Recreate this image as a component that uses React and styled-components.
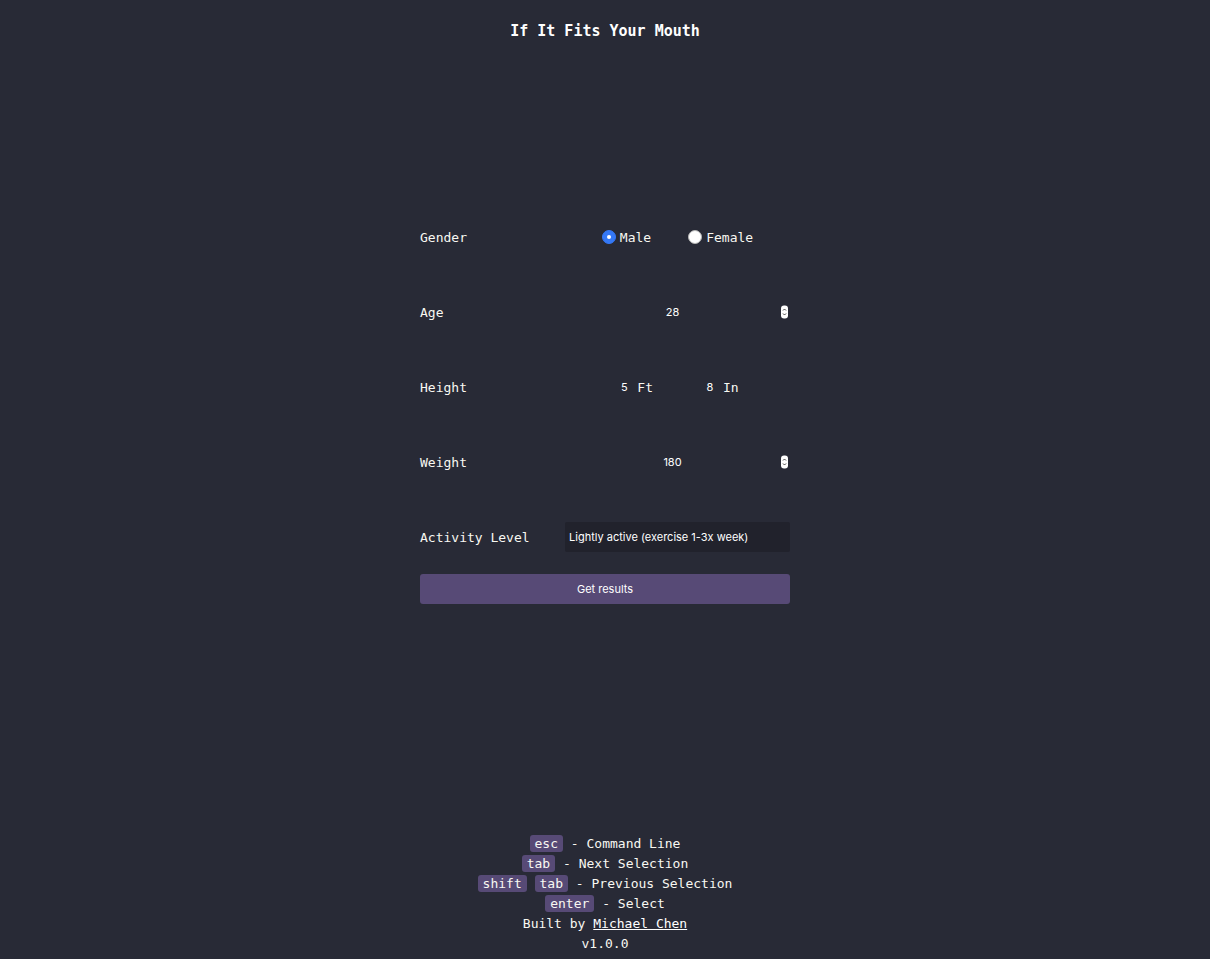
import React from "react";
import styled, { createGlobalStyle } from "styled-components";

const GlobalStyle = createGlobalStyle`
  html, body { margin: 0; padding: 0; background: #282a36; }
  body {
    font-family: "DejaVu Sans Mono", "Liberation Mono", monospace;
    color: #f8f8f2;
  }
  input[type=number]::-webkit-inner-spin-button,
  input[type=number]::-webkit-outer-spin-button { -webkit-appearance: none; margin: 0; }
`;

const Page = styled.div`
  min-height: 100vh;
  display: flex;
  flex-direction: column;
`;

const Header = styled.header`
  padding-top: 21px;
  text-align: center;
`;

const Title = styled.h1`
  margin: 0;
  font-size: 15px;
  line-height: 20px;
  font-weight: bold;
  color: #ffffff;
`;

const Main = styled.main`
  flex: 1;
`;

const Form = styled.form`
  width: 370px;
  margin: 181px auto 0;
  display: flex;
  flex-direction: column;
`;

const Row = styled.div`
  display: flex;
  align-items: center;
  height: 30px;
  margin-bottom: ${(p) => (p.$last ? "22px" : "45px")};
`;

const Label = styled.label`
  width: 145px;
  flex: none;
  font-size: 13px;
  color: #f8f8f2;
`;

const Control = styled.div`
  flex: 1;
  height: 100%;
  display: flex;
  justify-content: center;
  align-items: center;
  position: relative;
`;

const RadioGroup = styled.div`
  display: flex;
  align-items: center;
  gap: 37px;
`;

const RadioOption = styled.label`
  display: flex;
  align-items: center;
  gap: 4px;
  font-size: 13px;
`;

const RadioDot = styled.span`
  width: 14px;
  height: 14px;
  box-sizing: border-box;
  border-radius: 50%;
  background: ${(p) => (p.$checked ? "#3478f6" : "#ffffff")};
  border: 1px solid ${(p) => (p.$checked ? "#3478f6" : "#b5b5b5")};
  display: flex;
  align-items: center;
  justify-content: center;
  &::after {
    content: "";
    display: ${(p) => (p.$checked ? "block" : "none")};
    width: 4px;
    height: 4px;
    border-radius: 50%;
    background: #ffffff;
  }
`;

const NumberInput = styled.input`
  width: ${(p) => p.$width || "100%"};
  height: 100%;
  box-sizing: border-box;
  border: none;
  outline: none;
  background: transparent;
  color: #ffffff;
  font-family: Inter, "Liberation Sans", Arial, sans-serif;
  font-size: 11px;
  text-align: center;
  padding: ${(p) => (p.$spin ? "0 10px 0 0" : "0")};
  -moz-appearance: textfield;
`;

const Spinner = styled.span`
  position: absolute;
  right: 2px;
  top: 50%;
  transform: translateY(-50%);
  width: 7px;
  height: 13px;
  border-radius: 3px;
  background: #ffffff;
  display: flex;
  align-items: center;
  justify-content: center;
`;

const HeightGroup = styled.div`
  display: flex;
  align-items: center;
`;

const UnitLabel = styled.span`
  font-size: 13px;
  margin-left: 5px;
  margin-right: ${(p) => (p.$gap ? "49px" : "0")};
`;

const Select = styled.select`
  width: 100%;
  height: 30px;
  background: #21222c;
  color: #ffffff;
  border: none;
  outline: none;
  border-radius: 2px;
  font-family: Inter, "Liberation Sans", Arial, sans-serif;
  font-size: 11px;
  padding: 0 0 0 4px;
  appearance: none;
  -webkit-appearance: none;
`;

const SubmitButton = styled.button`
  width: 100%;
  height: 30px;
  border: none;
  border-radius: 3px;
  background: #574a76;
  color: #ffffff;
  font-family: Inter, "Liberation Sans", Arial, sans-serif;
  font-size: 11px;
  cursor: pointer;
`;

const Footer = styled.footer`
  text-align: center;
  font-size: 13px;
  line-height: 20px;
  padding-bottom: 5px;
  color: #f8f8f2;
`;

const Line = styled.div``;

const Kbd = styled.span`
  background: #574a76;
  border-radius: 3px;
  padding: 1px 5px;
`;

const Link = styled.a`
  color: #ffffff;
  text-decoration: underline;
`;

function SpinIcon() {
  return (
    <Spinner>
      <svg width="5" height="11" viewBox="0 0 5 11">
        <path d="M1 4 L2.5 2.5 L4 4" fill="none" stroke="#333" strokeWidth="0.9" />
        <path d="M1 7 L2.5 8.5 L4 7" fill="none" stroke="#333" strokeWidth="0.9" />
      </svg>
    </Spinner>
  );
}

export default function App() {
  return (
    <Page>
      <GlobalStyle />
      <Header>
        <Title>If It Fits Your Mouth</Title>
      </Header>
      <Main>
        <Form onSubmit={(e) => e.preventDefault()}>
          <Row>
            <Label>Gender</Label>
            <Control>
              <RadioGroup>
                <RadioOption>
                  <RadioDot $checked />
                  Male
                </RadioOption>
                <RadioOption>
                  <RadioDot />
                  Female
                </RadioOption>
              </RadioGroup>
            </Control>
          </Row>
          <Row>
            <Label>Age</Label>
            <Control>
              <NumberInput type="number" defaultValue="28" $spin />
              <SpinIcon />
            </Control>
          </Row>
          <Row>
            <Label>Height</Label>
            <Control>
              <HeightGroup>
                <NumberInput type="number" defaultValue="5" $width="16px" />
                <UnitLabel $gap>Ft</UnitLabel>
                <NumberInput type="number" defaultValue="8" $width="16px" />
                <UnitLabel>In</UnitLabel>
              </HeightGroup>
            </Control>
          </Row>
          <Row>
            <Label>Weight</Label>
            <Control>
              <NumberInput type="number" defaultValue="180" $spin />
              <SpinIcon />
            </Control>
          </Row>
          <Row $last>
            <Label>Activity Level</Label>
            <Control>
              <Select defaultValue="light">
                <option value="sedentary">Sedentary (little or no exercise)</option>
                <option value="light">Lightly active (exercise 1-3x week)</option>
                <option value="moderate">Moderately active (exercise 3-5x week)</option>
                <option value="very">Very active (exercise 6-7x week)</option>
              </Select>
            </Control>
          </Row>
          <SubmitButton type="submit">Get results</SubmitButton>
        </Form>
      </Main>
      <Footer>
        <Line><Kbd>esc</Kbd> - Command Line</Line>
        <Line><Kbd>tab</Kbd> - Next Selection</Line>
        <Line><Kbd>shift</Kbd> <Kbd>tab</Kbd> - Previous Selection</Line>
        <Line><Kbd>enter</Kbd> - Select</Line>
        <Line>Built by <Link href="#">Michael Chen</Link></Line>
        <Line>v1.0.0</Line>
      </Footer>
    </Page>
  );
}
